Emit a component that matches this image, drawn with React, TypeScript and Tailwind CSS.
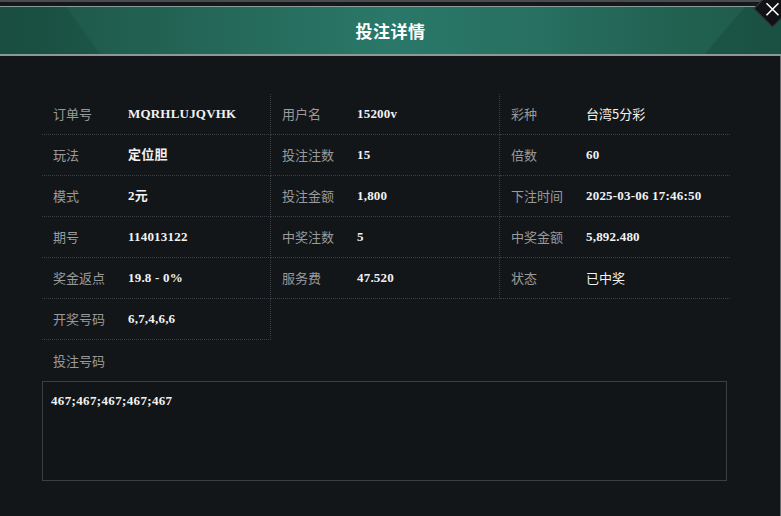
import React from "react";

type Cell = { label: string; value: string; bold?: boolean };

const rows: Cell[][] = [
  [
    { label: "订单号", value: "MQRHLUJQVHK" },
    { label: "用户名", value: "15200v" },
    { label: "彩种", value: "台湾5分彩", bold: false },
  ],
  [
    { label: "玩法", value: "定位胆" },
    { label: "投注注数", value: "15" },
    { label: "倍数", value: "60" },
  ],
  [
    { label: "模式", value: "2元" },
    { label: "投注金额", value: "1,800" },
    { label: "下注时间", value: "2025-03-06 17:46:50" },
  ],
  [
    { label: "期号", value: "114013122" },
    { label: "中奖注数", value: "5" },
    { label: "中奖金额", value: "5,892.480" },
  ],
  [
    { label: "奖金返点", value: "19.8 - 0%" },
    { label: "服务费", value: "47.520" },
    { label: "状态", value: "已中奖", bold: false },
  ],
];

const labelFont = { fontFamily: '"Noto Sans CJK SC", "Noto Sans", sans-serif' };
const valueFont = { fontFamily: '"Liberation Serif", "Noto Sans CJK SC", serif' };

function InfoCell({ cell, col }: { cell: Cell; col: number }) {
  const bold = cell.bold !== false;
  return (
    <div
      className={`flex h-[41px] items-center border-b border-dotted border-[#3a3d41] ${
        col < 2 ? "border-r" : ""
      }`}
    >
      <div className="w-[86px] shrink-0 pl-[11px] text-[13px] text-[#9a9a9a]" style={labelFont}>
        {cell.label}
      </div>
      <div
        className={`text-[13px] text-[#f2f2f2] ${bold ? "font-bold tracking-[0.2px]" : "font-normal"}`}
        style={bold ? valueFont : labelFont}
      >
        {cell.value}
      </div>
    </div>
  );
}

export default function App() {
  return (
    <div className="relative h-[516px] w-[781px] overflow-hidden bg-[#131619]">
      {/* top strip */}
      <div className="h-[2px] bg-[#4a4d50]" />
      <div className="h-[4px] bg-[#15181b]" />
      <div className="h-[1px] bg-[#8c9a97]" />
      {/* header */}
      <div
        className="relative flex h-[47px] items-center justify-center overflow-hidden"
        style={{
          background:
            "linear-gradient(90deg, #1c5345 0%, #205c4d 12%, #25695a 30%, #2a7869 50%, #276f61 70%, #21604f 88%, #1f5a4b 100%)",
        }}
      >
        <svg className="pointer-events-none absolute inset-0" width="781" height="47" viewBox="0 0 781 47">
          <polygon points="0,0 66,0 100,47 0,47" fill="#0f3a2f" opacity="0.22" />
          <polygon points="781,0 745,0 705,47 781,47" fill="#0f3a2f" opacity="0.28" />
        </svg>
        <span
          className="relative text-[17px] font-bold tracking-[0.5px] text-white"
          style={labelFont}
        >
          投注详情
        </span>
      </div>
      <div className="h-[2px] bg-[#8e9896]" />
      {/* close button */}
      <div className="absolute left-[759px] top-[-5px] flex h-[27px] w-[27px] rotate-45 items-center justify-center border border-[#3a3d40] bg-[#101214]">
        <svg className="-rotate-45" width="14" height="14" viewBox="0 0 14 14">
          <path d="M1 1 L13 13 M13 1 L1 13" stroke="#ffffff" strokeWidth="1.6" />
        </svg>
      </div>
      {/* body */}
      <div className="h-[460px] border-r border-[#6a6d70] pl-[42px] pt-[38px]">
        <div className="grid w-[688px] grid-cols-[229px_229px_230px]">
          {rows.map((r, i) =>
            r.map((c, j) => <InfoCell key={`${i}-${j}`} cell={c} col={j} />)
          )}
          <InfoCell cell={{ label: "开奖号码", value: "6,7,4,6,6" }} col={0} />
        </div>
        <div className="flex h-[41px] items-center pl-[11px] text-[13px] text-[#9a9a9a]" style={labelFont}>
          投注号码
        </div>
        <div className="h-[100px] w-[685px] border border-[#3b3e42] bg-[#121518] px-[8px] pt-[11px]">
          <div
            className="text-[13px] font-bold leading-[15px] tracking-[0.35px] text-[#f2f2f2]"
            style={valueFont}
          >
            467;467;467;467;467
          </div>
        </div>
      </div>
    </div>
  );
}
